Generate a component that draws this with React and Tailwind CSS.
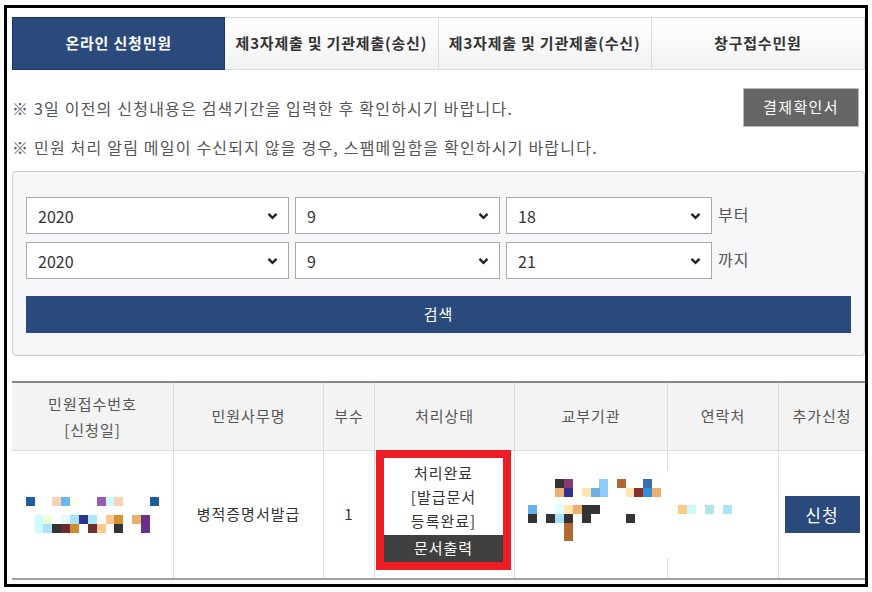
import React from "react";

const FONT = { fontFamily: '"Noto Sans CJK KR", "Noto Sans", sans-serif' };

// redaction mosaic blocks, page coordinates
const mosaicA = [
  [26, 498, "#1f5c9a"], [52, 498, "#fdd0b8"], [61, 498, "#6bb8ec"], [70, 498, "#fffde8"],
  [97, 498, "#9b59b6"], [106, 498, "#ccfaff"], [114, 498, "#fdd0b8"], [150, 498, "#1f5c9a"],
  [35, 516, "#ccfbff"], [43, 516, "#eaffd8"], [61, 516, "#e0fcff"], [70, 516, "#a8e2fb"],
  [79, 516, "#2e3192"], [88, 516, "#aee6fb"], [106, 516, "#fcc98a"], [114, 516, "#d4922f"],
  [132, 516, "#e9b070"], [141, 516, "#6e2e8c", 9, 18],
  [35, 525, "#ccfbff"], [43, 525, "#b1def8"], [52, 525, "#333333"], [61, 525, "#6b2b2b"],
  [70, 525, "#d08a2e"], [88, 525, "#6e2f30"], [97, 525, "#fdc88a"], [114, 525, "#333333"],
];

const mosaicB = [
  [555, 479, "#333333"], [564, 479, "#8b3a6e"], [599, 479, "#8ecdf8", 9, 18], [617, 479, "#b06a30"],
  [643, 479, "#3a6eb0"],
  [555, 488, "#eeb070"], [564, 488, "#2e3192"], [582, 488, "#ffe7b0"], [591, 488, "#6db0e8"],
  [626, 488, "#ffe6b0"], [634, 488, "#8b2e2e"], [643, 488, "#3090d8"], [652, 488, "#eeb070"],
  [528, 505, "#6bb0ea"], [555, 505, "#e0fcff"], [564, 505, "#ffe5b0"], [573, 505, "#eeb070"],
  [582, 505, "#333333", 18, 9],
  [678, 505, "#fdc98a"], [687, 505, "#ccfbff"], [705, 505, "#b0e6e6"], [723, 505, "#a8e2fb"],
  [528, 514, "#333333"], [546, 514, "#333333"], [555, 514, "#a8e0fb"], [564, 514, "#333333"],
  [582, 514, "#333333"], [626, 514, "#333333"],
  [564, 523, "#b06a30", 9, 18],
];

function Mosaic({ blocks, viewBox, width, height, bg }) {
  return (
    <svg width={width} height={height} viewBox={viewBox} shapeRendering="crispEdges">
      {bg && <rect x="-2000" y="-2000" width="5000" height="5000" fill="#ffffff" />}
      {blocks.map(([x, y, c, w = 9, h = 9], i) => (
        <rect key={i} x={x} y={y} width={w} height={h} fill={c} />
      ))}
    </svg>
  );
}

function Select({ value, width }) {
  return (
    <div
      className="h-[37px] border border-[#aaa] bg-white flex items-center justify-between pl-[11px] pr-[10px] text-[16px] text-[#333]"
      style={{ width }}
    >
      <span>{value}</span>
      <svg width="11" height="8" viewBox="0 0 11 8">
        <path d="M1.5 1.8 L5.5 5.8 L9.5 1.8" fill="none" stroke="#222" strokeWidth="2.4" />
      </svg>
    </div>
  );
}

export default function App() {
  const tabs = [
    { id: "online", label: "온라인 신청민원" },
    { id: "send", label: "제3자제출 및 기관제출(송신)" },
    { id: "recv", label: "제3자제출 및 기관제출(수신)" },
    { id: "window", label: "창구접수민원" },
  ];
  const active = "online";

  const headCell = "flex items-center justify-center text-center text-[15px] tracking-[1px] text-[#555] border-l border-[#ddd]";
  const bodyCell = "flex items-center justify-center text-[15px] tracking-[1px] text-[#333] border-l border-[#ddd]";

  return (
    <div className="w-[872px] h-[592px] bg-white" style={FONT}>
      <div className="ml-[4px] mt-[5px] w-[864px] h-[582px] border-[3px] border-black pl-[5px] pt-[9px] flex flex-col">
        {/* Tabs */}
        <div className="grid grid-cols-4 h-[53px]">
          {tabs.map((t) => (
            <div
              key={t.id}
              className={`flex items-center justify-center text-[15px] tracking-[0.8px] font-bold ${
                active === t.id
                  ? "bg-[#2b4a7c] border border-[#1c3560] text-white"
                  : "bg-gradient-to-b from-white to-[#f2f2f2] border border-l-0 border-[#dcdcdc] text-[#333]"
              }`}
            >
              {t.label}
            </div>
          ))}
        </div>

        {/* Notices */}
        <div className="flex items-center justify-between mt-[18px] pr-[6px]">
          <p className="text-[16px] tracking-[1.2px] text-[#555]">
            ※ 3일 이전의 신청내용은 검색기간을 입력한 후 확인하시기 바랍니다.
          </p>
          <button className="w-[116px] h-[39px] bg-[#666] border border-[#bbb] text-white text-[15px] tracking-[1.4px]">
            결제확인서
          </button>
        </div>
        <p className="mt-[8px] text-[16px] tracking-[1.2px] text-[#555] leading-[24px]">
          ※ 민원 처리 알림 메일이 수신되지 않을 경우, 스팸메일함을 확인하시기 바랍니다.
        </p>

        {/* Search panel */}
        <div className="mt-[12px] h-[185px] border border-[#ccc] rounded-[4px] bg-[#f7f7f9] pt-[25px] pl-[13px] pr-[13px]">
          <div className="flex flex-col gap-[8px]">
            <div className="flex items-start gap-[6px]">
              <Select value="2020" width={263} />
              <Select value="9" width={205} />
              <Select value="18" width={206} />
              <span className="text-[16px] tracking-[1px] text-[#555] mt-[5px]">부터</span>
            </div>
            <div className="flex items-start gap-[6px]">
              <Select value="2020" width={263} />
              <Select value="9" width={205} />
              <Select value="21" width={206} />
              <span className="text-[16px] tracking-[1px] text-[#555] mt-[5px]">까지</span>
            </div>
          </div>
          <button className="mt-[17px] w-[825px] h-[37px] bg-[#2b4a7c] text-white text-[15px] tracking-[1px]">
            검색
          </button>
        </div>

        {/* Result table */}
        <div className="relative mt-[25px] w-[853px]">
          <div className="grid grid-cols-[161px_150px_51px_140px_153px_111px_87px] h-[70px] border-t-2 border-b border-t-[#888] border-b-[#ddd] bg-[#f3f3f3]">
            <div className={`${headCell} border-l-0 flex-col leading-[26px]`}>
              <span>민원접수번호</span>
              <span>[신청일]</span>
            </div>
            <div className={headCell}>민원사무명</div>
            <div className={headCell}>부수</div>
            <div className={headCell}>처리상태</div>
            <div className={headCell}>교부기관</div>
            <div className={headCell}>연락처</div>
            <div className={headCell}>추가신청</div>
          </div>

          <div className="grid grid-cols-[161px_150px_51px_140px_153px_111px_87px] h-[129px] border-b-2 border-[#a0a0a0]">
            <div className={`${bodyCell} border-l-0`}>
              <Mosaic blocks={mosaicA} viewBox="12 496 161 40" width={161} height={40} />
            </div>
            <div className={bodyCell}>병적증명서발급</div>
            <div className={bodyCell}>1</div>
            <div className="border-l border-[#ddd] pl-[1px] pr-[3px]">
              <div className="border-[8px] border-[#ee1c25] h-[120px] -mt-[1px] flex flex-col bg-white">
                <div className="flex-1 flex flex-col items-center pt-[3px] text-[15px] tracking-[1px] text-[#333] leading-[24px]">
                  <span>처리완료</span>
                  <span>[발급문서</span>
                  <span>등록완료]</span>
                </div>
                <div className="h-[27px] bg-[#404040] text-white text-[15px] tracking-[1px] flex items-center justify-center">
                  문서출력
                </div>
              </div>
            </div>
            <div className={bodyCell}></div>
            <div className={bodyCell}></div>
            <div className={bodyCell}>
              <button className="w-[75px] h-[37px] bg-[#2b4a7c] text-white text-[17px] tracking-[1px]">신청</button>
            </div>
          </div>

          {/* redaction over 교부기관 / 연락처 */}
          <div className="absolute left-[508px] top-[89px]">
            <Mosaic blocks={mosaicB} viewBox="520 470 250 88" width={250} height={88} bg />
          </div>
        </div>
      </div>
    </div>
  );
}
